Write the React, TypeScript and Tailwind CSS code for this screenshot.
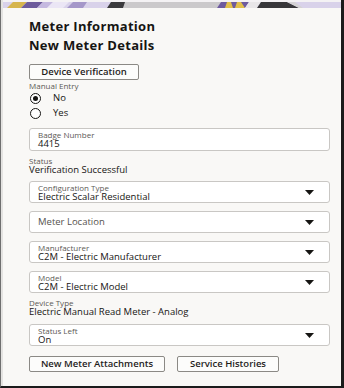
import React from 'react';

const font = { fontFamily: '"Open Sans", "Noto Sans", Arial, sans-serif' };

const Banner = () => (
  <svg width="100%" height="8" viewBox="0 0 338 8" preserveAspectRatio="none" className="block">
    <rect x="0" y="0" width="338" height="2" fill="#f4f2f4" />
    <rect x="0" y="2" width="338" height="6" fill="#d9d2ea" />
    <polygon points="4,8 10,2 24,2 18,8" fill="#d6b54e" />
    <polygon points="18,8 24,2 40,2 34,8" fill="#6d5b9c" />
    <polygon points="34,8 40,2 50,2 44,8" fill="#c5b9e0" />
    <polygon points="44,8 50,2 66,2 60,8" fill="#ebe6f5" />
    <polygon points="64,8 70,2 84,2 80,8" fill="#a597c9" />
    <polygon points="104,8 108,2 122,2 126,8" fill="#3b3a3d" />
    <polygon points="120,8 122,2 218,2 214,8" fill="#cbc9cb" />
    <polygon points="214,8 218,2 246,2 242,8" fill="#6e5b9e" />
    <polygon points="222,8 224,2 228,2 230,8" fill="#e2c04a" />
    <polygon points="232,8 234,2 238,2 242,8" fill="#e2c04a" />
    <polygon points="242,8 246,2 258,2 254,8" fill="#e8e6e8" />
    <polygon points="254,8 258,2 284,2 296,8" fill="#38373a" />
    <polygon points="284,2 292,2 300,8 296,8" fill="#d4d2d4" />
  </svg>
);

const Caret = () => (
  <svg width="9" height="5" viewBox="0 0 9 5" className="shrink-0">
    <polygon points="0,0 9,0 4.5,5" fill="#161513" />
  </svg>
);

const SelectField = ({ label, value }: { label?: string; value: string }) => (
  <div className="h-[22px] w-full bg-white border border-[#c9c7c4] rounded-[3px] flex items-center pl-[8px] pr-[15px]">
    {label ? (
      <div className="flex-1 flex flex-col self-start pt-[2px]">
        <span className="text-[8px] leading-[8px] text-[#5c5955]">{label}</span>
        <span className="text-[9.5px] leading-[10px] text-[#161513]">{value}</span>
      </div>
    ) : (
      <span className="flex-1 text-[9.5px] leading-[12px] text-[#55524e]">{value}</span>
    )}
    <Caret />
  </div>
);

const Radio = ({ checked, label }: { checked?: boolean; label: string }) => (
  <div className="h-[15px] flex items-center">
    <span className="ml-[1px] w-[11px] h-[11px] rounded-full border-[1.5px] border-[#161513] flex items-center justify-center bg-white">
      {checked && <span className="w-[5px] h-[5px] rounded-full bg-[#161513]" />}
    </span>
    <span className="ml-[12px] text-[9.5px] leading-[10px] text-[#161513] -mt-[2px]">{label}</span>
  </div>
);

const Btn = ({ children, w }: { children: React.ReactNode; w: string }) => (
  <button className={`${w} h-[16px] bg-[#fcfcfb] border border-[#8b8985] rounded-[2px] text-[9.5px] leading-[10px] font-semibold text-[#1f1d1b] flex items-center justify-center`}>
    {children}
  </button>
);

export default function App() {
  return (
    <div style={font} className="w-[344px] h-[388px] bg-[#f9f8f6] border-l border-l-[#6f6f6f] border-r-[3px] border-r-[#1b1b1b] border-b-2 border-b-[#1b1b1b] overflow-hidden">
      <div className="h-full border-l-2 border-l-[#e4e3e1] flex flex-col">
        <Banner />
        <div className="pl-[26px] pr-[11px] flex flex-col">
          <h1 className="mt-[10px] text-[13px] leading-[16px] font-bold tracking-[0.3px] text-[#161513]">Meter Information</h1>
          <h2 className="mt-[3px] text-[13px] leading-[16px] font-bold tracking-[0.3px] text-[#161513]">New Meter Details</h2>
          <div className="mt-[11px]">
            <Btn w="w-[110px]">Device Verification</Btn>
          </div>
          <span className="mt-[1px] text-[8px] leading-[10px] text-[#5c5955]">Manual Entry</span>
          <Radio checked label="No" />
          <Radio label="Yes" />
          <div className="mt-[7px] h-[23px] bg-white border border-[#c9c7c4] rounded-[3px] pl-[8px] pt-[2px] flex flex-col">
            <span className="text-[8px] leading-[8px] text-[#5c5955]">Badge Number</span>
            <span className="text-[9.5px] leading-[10px] text-[#161513]">4415</span>
          </div>
          <span className="mt-[6px] text-[8px] leading-[8px] text-[#5c5955]">Status</span>
          <span className="text-[9.5px] leading-[10px] text-[#161513]">Verification Successful</span>
          <div className="mt-[6px] flex flex-col gap-[8px]">
            <SelectField label="Configuration Type" value="Electric Scalar Residential" />
            <SelectField value="Meter Location" />
            <SelectField label="Manufacturer" value="C2M - Electric Manufacturer" />
            <SelectField label="Model" value="C2M - Electric Model" />
          </div>
          <span className="mt-[6px] text-[8px] leading-[8px] text-[#5c5955]">Device Type</span>
          <span className="text-[9.5px] leading-[10px] text-[#161513]">Electric Manual Read Meter - Analog</span>
          <div className="mt-[7px]">
            <SelectField label="Status Left" value="On" />
          </div>
          <div className="mt-[10px] flex gap-[12px]">
            <Btn w="w-[136px]">New Meter Attachments</Btn>
            <Btn w="w-[102px]">Service Histories</Btn>
          </div>
        </div>
      </div>
    </div>
  );
}
